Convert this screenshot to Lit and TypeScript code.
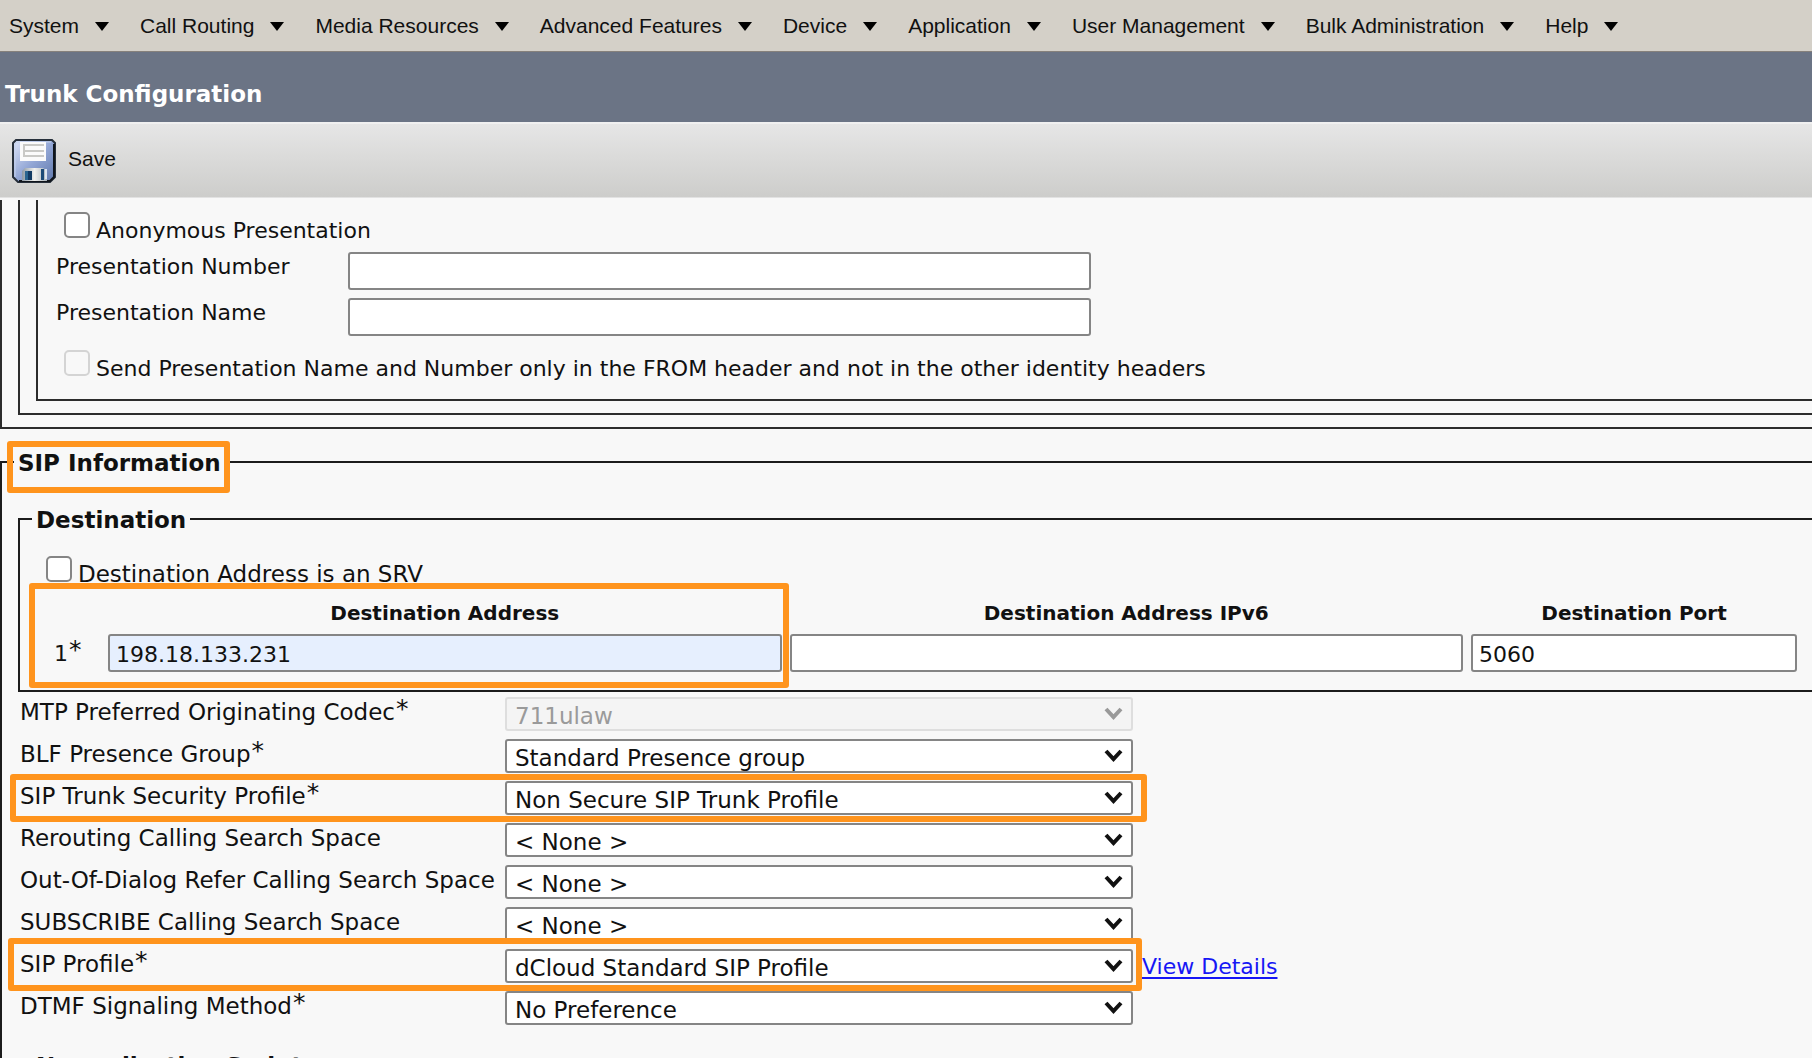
import { LitElement, html, css, svg, nothing } from "lit";
import { customElement, property } from "lit/decorators.js";

interface SelectRow {
  id: string;
  label: string;
  value: string;
  required?: boolean;
  disabled?: boolean;
  mark?: "snug" | "roomy";
  link?: string;
}

const MENUS = [
  "System",
  "Call Routing",
  "Media Resources",
  "Advanced Features",
  "Device",
  "Application",
  "User Management",
  "Bulk Administration",
  "Help",
];

const ROWS: SelectRow[] = [
  { id: "codec", label: "MTP Preferred Originating Codec", value: "711ulaw", required: true, disabled: true },
  { id: "blf", label: "BLF Presence Group", value: "Standard Presence group", required: true },
  { id: "security", label: "SIP Trunk Security Profile", value: "Non Secure SIP Trunk Profile", required: true, mark: "snug" },
  { id: "reroute", label: "Rerouting Calling Search Space", value: "< None >" },
  { id: "refer", label: "Out-Of-Dialog Refer Calling Search Space", value: "< None >" },
  { id: "subscribe", label: "SUBSCRIBE Calling Search Space", value: "< None >" },
  { id: "profile", label: "SIP Profile", value: "dCloud Standard SIP Profile", required: true, mark: "roomy", link: "View Details" },
  { id: "dtmf", label: "DTMF Signaling Method", value: "No Preference", required: true },
];

const shared = css`
  *,
  *::before,
  *::after {
    box-sizing: border-box;
  }
  input,
  select,
  button {
    font: inherit;
    color: inherit;
    margin: 0;
  }
  .star {
    font-size: 25px;
    line-height: 0;
    vertical-align: 3px;
    margin-left: 1px;
  }
  .mark {
    position: absolute;
    border: 6px solid #ff941d;
    border-radius: 3px;
    pointer-events: none;
  }
`;

@customElement("menu-bar")
export class MenuBar extends LitElement {
  static styles = [
    shared,
    css`
      :host {
        display: block;
      }
      .bar {
        display: flex;
        gap: 31px;
        height: 52px;
        padding-left: 9px;
        background: #d4d0c8;
        border-bottom: 1px solid #86817c;
        font-family: "Liberation Sans", Arial, sans-serif;
        font-size: 21px;
      }
      .item {
        display: flex;
        align-items: center;
        gap: 16px;
        padding: 0;
        border: 0;
        background: none;
        white-space: nowrap;
      }
      .arrow {
        display: block;
        width: 14px;
        height: 9px;
        margin-top: 2px;
      }
    `,
  ];

  render() {
    return html`<nav class="bar">
      ${MENUS.map(
        (name) => html`<button class="item" type="button">
          ${name}<svg class="arrow" viewBox="0 0 14 9" aria-hidden="true"><path d="M0 0h14L7 9z" /></svg>
        </button>`
      )}
    </nav>`;
  }
}

const floppy = svg`
  <defs>
    <linearGradient id="body" x1="0" y1="0" x2="1" y2="1">
      <stop offset="0" stop-color="#dfe6fa" />
      <stop offset="0.5" stop-color="#93a7d6" />
      <stop offset="1" stop-color="#5d76aa" />
    </linearGradient>
    <linearGradient id="metal" x1="0" y1="0" x2="1" y2="0">
      <stop offset="0" stop-color="#8d99a5" />
      <stop offset="0.5" stop-color="#f1f1ee" />
      <stop offset="1" stop-color="#a9b2ba" />
    </linearGradient>
  </defs>
  <path d="M4 1h36l3 3v34l-5 5H6l-5-5V4z" fill="url(#body)" stroke="#27303b" stroke-width="2" />
  <path d="M3 38V5l2-2h34" fill="none" stroke="#c4d2ee" stroke-width="1" />
  <path d="M42 5v33l-4 4H7" fill="none" stroke="#10151c" stroke-width="2" />
  <path d="M8 3h26v19H8z" fill="#fbfbfb" />
  <path d="M12 6h20M12 12h20M12 17h20M12 5v13" fill="none" stroke="#c9c9c6" stroke-width="2" />
  <path d="M10 32l3-3h18l4 3v10H10z" fill="url(#metal)" />
  <path d="M13 32h7v9h-7z" fill="#123a63" />
  <path d="M13 32h3v9h-3z" fill="#2a6590" />
  <path d="M29 30h3v11h-3z" fill="#1b4a78" />
  <path d="M33 30h2v10h-2z" fill="#dbe5f2" />
`;

@customElement("select-row")
export class SelectRowElement extends LitElement {
  @property({ attribute: false }) row!: SelectRow;

  static styles = [
    shared,
    css`
      :host {
        display: block;
      }
      .row {
        position: relative;
        display: grid;
        grid-template-columns: 485px 628px auto;
        justify-content: start;
        align-items: start;
        height: 42px;
      }
      .label {
        line-height: 30px;
        white-space: nowrap;
      }
      .field {
        position: relative;
        display: block;
      }
      .select {
        display: block;
        width: 100%;
        height: 34px;
        padding: 3px 40px 0 8px;
        appearance: none;
        border: 2px solid #858585;
        border-radius: 3px;
        background: #fff;
        color: #111;
      }
      .select:disabled {
        border-color: #dedede;
        background: #f4f4f4;
        color: #9a9a9a;
        opacity: 1;
      }
      .chevron {
        position: absolute;
        right: 10px;
        top: 10px;
        width: 19px;
        height: 13px;
        fill: none;
        stroke: #111;
        stroke-width: 4;
        pointer-events: none;
      }
      .select:disabled + .chevron {
        stroke: #999;
      }
      .link {
        margin-left: 9px;
        font-size: 22px;
        line-height: 36px;
        color: #1616f5;
        text-underline-offset: 3px;
      }
      .mark {
        left: -10px;
        width: 1137px;
        top: -7px;
        height: 48px;
      }
      .mark.roomy {
        left: -12px;
        width: 1134px;
        top: -11px;
        height: 53px;
      }
    `,
  ];

  render() {
    const r = this.row;
    return html`<div class="row">
      <label class="label" for=${r.id}>${r.label}${r.required ? html`<span class="star">*</span>` : nothing}</label>
      <span class="field">
        <select class="select" id=${r.id} ?disabled=${r.disabled}>
          <option selected>${r.value}</option>
        </select>
        <svg class="chevron" viewBox="0 0 19 13" aria-hidden="true"><path d="M2 2l7.500 8 7.500-8" /></svg>
      </span>
      ${r.link ? html`<a class="link" href="#details">${r.link}</a>` : nothing}
      ${r.mark ? html`<span class="mark ${r.mark}"></span>` : nothing}
    </div>`;
  }
}

@customElement("app-root")
export class AppRoot extends LitElement {
  static styles = [
    shared,
    css`
      :host {
        display: flex;
        flex-direction: column;
        height: 100vh;
        overflow: hidden;
        background: #f8f8f8;
        color: #111;
        font-family: Verdana, "DejaVu Sans", sans-serif;
        font-size: 22px;
        line-height: 28px;
      }
      .title {
        flex: none;
        height: 70px;
        margin: 0;
        padding: 27px 5px 0;
        background: #6b7485;
        color: #fff;
        font-size: 23px;
        line-height: 30px;
        font-weight: bold;
      }
      .toolbar {
        flex: none;
        display: flex;
        align-items: center;
        height: 76px;
        padding-left: 12px;
        border-top: 2px solid #f0f0f0;
        border-bottom: 1px solid #e2e2e2;
        background: linear-gradient(#e6e6e6, #cdcdcb);
        font-family: "Liberation Sans", Arial, sans-serif;
        font-size: 21px;
      }
      .save {
        display: flex;
        align-items: center;
        gap: 12px;
        padding: 0;
        border: 0;
        background: none;
      }
      .caption {
        padding-bottom: 4px;
      }
      .disk {
        display: block;
        width: 44px;
        height: 44px;
      }
      .content {
        flex: 1;
        min-height: 0;
        overflow: hidden;
        padding-top: 2px;
      }
      .nest {
        border: solid #2c2c2c;
        border-width: 0 0 2px 2px;
        padding: 0 0 12px 16px;
      }
      .nest.inner {
        padding: 12px 0 9px 18px;
      }
      .check {
        display: flex;
        align-items: baseline;
        gap: 6px;
        height: 40px;
        margin-left: 8px;
      }
      .check.late {
        margin-top: 6px;
      }
      .box {
        flex: none;
        appearance: none;
        width: 26px;
        height: 26px;
        border: 2px solid #858585;
        border-radius: 5px;
        background: #fff;
      }
      .box:disabled {
        border-color: #d4d4d4;
        background: #f8f8f8;
      }
      .pair {
        display: grid;
        grid-template-columns: 292px 743px;
        align-items: start;
        height: 46px;
        line-height: 30px;
      }
      .text {
        display: block;
        width: 100%;
        height: 38px;
        padding: 3px 6px 0;
        border: 2px solid #858585;
        border-radius: 3px;
        background: #fff;
      }
      .text.filled {
        background: #e6effe;
      }
      .group {
        min-width: 0;
        margin: 0;
        padding: 0 0 0 16px;
        border: 2px solid #1c1c1c;
        border-right: 0;
        font-size: 23px;
      }
      .sip {
        margin-top: 17px;
        border-bottom: 0;
      }
      .legend {
        position: relative;
        margin-left: -4px;
        padding: 2px 4px 0;
        font-size: 23px;
        line-height: 30px;
        font-weight: bold;
      }
      .legend .mark {
        left: -7px;
        right: -5px;
        top: -5px;
        height: 52px;
      }
      .destination {
        margin-top: 25px;
        padding-top: 21px;
        padding-bottom: 16px;
      }
      .destination .check {
        margin-left: 10px;
      }
      .holder {
        position: relative;
        padding-right: 15px;
        font-size: 22px;
      }
      .holder .mark {
        left: -7px;
        top: -13px;
        width: calc(50% - 128px);
        height: 105px;
      }
      .table {
        width: 100%;
        table-layout: fixed;
        border-collapse: collapse;
      }
      .number {
        width: 72px;
      }
      .port {
        width: 326px;
      }
      .head {
        height: 38px;
        padding: 0 8px 4px 0;
        font-size: 20px;
        line-height: 34px;
        text-align: center;
      }
      .cell {
        padding: 0 8px 0 0;
        line-height: 40px;
        vertical-align: top;
      }
      .cell.index {
        padding-left: 18px;
      }
      .head.last,
      .cell.last {
        padding-right: 0;
      }
      .rows {
        padding: 5px 0 0 2px;
      }
      .script {
        height: 60px;
        margin-top: 16px;
      }
    `,
  ];

  render() {
    return html`
      <menu-bar></menu-bar>
      <h1 class="title">Trunk Configuration</h1>
      <div class="toolbar">
        <button class="save" type="button">
          <svg class="disk" viewBox="0 0 44 44" aria-hidden="true">${floppy}</svg><span class="caption">Save</span>
        </button>
      </div>
      <main class="content">
        <div class="nest">
          <div class="nest">
            <div class="nest inner">
              <div class="check">
                <input class="box" type="checkbox" id="anonymous" />
                <label for="anonymous">Anonymous Presentation</label>
              </div>
              <div class="pair">
                <label for="pnumber">Presentation Number</label>
                <input class="text" type="text" id="pnumber" />
              </div>
              <div class="pair">
                <label for="pname">Presentation Name</label>
                <input class="text" type="text" id="pname" />
              </div>
              <div class="check late">
                <input class="box" type="checkbox" id="fromonly" disabled />
                <label for="fromonly"
                  >Send Presentation Name and Number only in the FROM header and not in the other identity headers</label
                >
              </div>
            </div>
          </div>
        </div>
        <fieldset class="group sip">
          <legend class="legend">SIP Information<span class="mark"></span></legend>
          <fieldset class="group destination">
            <legend class="legend">Destination</legend>
            <div class="check">
              <input class="box" type="checkbox" id="srv" />
              <label for="srv">Destination Address is an SRV</label>
            </div>
            <div class="holder">
              <table class="table">
                <thead>
                  <tr>
                    <td class="number"></td>
                    <th class="head" id="addr">Destination Address</th>
                    <th class="head" id="addr6">Destination Address IPv6</th>
                    <th class="head last port" id="port">Destination Port</th>
                  </tr>
                </thead>
                <tbody>
                  <tr>
                    <td class="cell index">1<span class="star">*</span></td>
                    <td class="cell">
                      <input class="text filled" type="text" aria-labelledby="addr" value="198.18.133.231" />
                    </td>
                    <td class="cell"><input class="text" type="text" aria-labelledby="addr6" /></td>
                    <td class="cell last"><input class="text" type="text" aria-labelledby="port" value="5060" /></td>
                  </tr>
                </tbody>
              </table>
              <span class="mark"></span>
            </div>
          </fieldset>
          <div class="rows">${ROWS.map((row) => html`<select-row .row=${row}></select-row>`)}</div>
          <fieldset class="group script">
            <legend class="legend">Normalization Script</legend>
          </fieldset>
        </fieldset>
      </main>
    `;
  }
}
